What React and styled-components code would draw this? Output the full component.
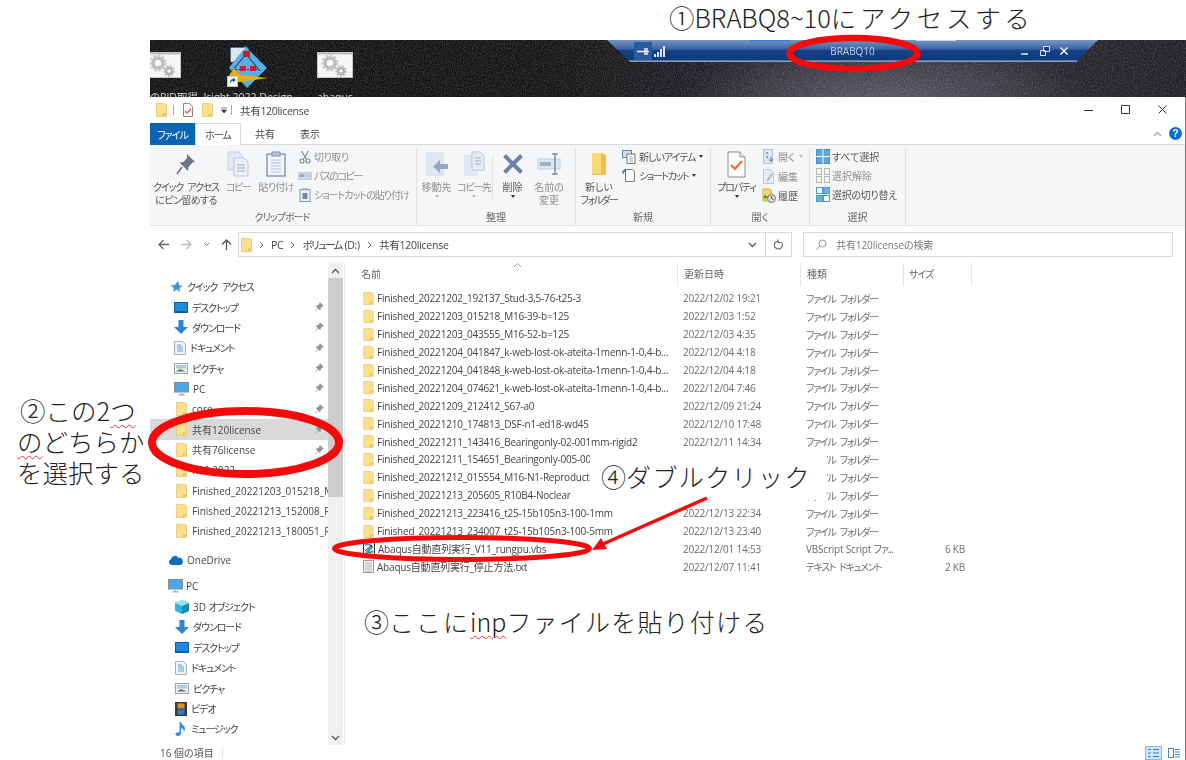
import React from "react";
import styled, { createGlobalStyle } from "styled-components";

const UI = `"Open Sans", "Noto Sans CJK JP", sans-serif`;
const NOTE = `"Noto Sans CJK JP", "Noto Sans", sans-serif`;

const Global = createGlobalStyle`
  html, body { margin: 0; padding: 0; background: #fff; overflow: hidden; }
  #root { width: 1186px; height: 760px; }
`;

const Page = styled.div`
  position: relative; width: 1186px; height: 760px; overflow: hidden;
  background: #fff; display: flex; flex-direction: column;
`;
const TopCaption = styled.div`
  height: 40px; box-sizing: border-box; padding-left: 669px;
  font: 300 25.5px/33px ${NOTE}; color: #222; white-space: nowrap;
`;
const Wide = styled.span` letter-spacing: ${p => p.$ls}px; `;
const Kata = styled.span` letter-spacing: ${p => p.$ls ?? -1.1}px; word-spacing: 3px; `;
const Shot = styled.div`
  margin-left: 150px; width: 1036px; height: 720px; display: flex; flex-direction: column;
  filter: blur(0.35px); overflow: hidden;
`;

/* desktop strip */
const Desktop = styled.div`
  position: relative; height: 57px; flex: none; overflow: hidden; display: flex; gap: 12px;
  background:
    radial-gradient(ellipse 200px 62px at 735px 60px, #5a5661 0%, #45424c 45%, rgba(50,48,54,0) 100%),
    linear-gradient(90deg, #121214 0%, #141416 38%, #26262b 62%, #2a2a30 80%, #1e1e23 100%);
`;
const Grain = styled.svg`
  position: absolute; inset: 0; width: 100%; height: 100%; opacity: .4; mix-blend-mode: screen;
`;
const DeskIcon = styled.div`
  position: relative; flex: none; width: ${p => p.$w}px; margin-left: ${p => p.$ml || 0}px;
  display: flex; flex-direction: column; align-items: ${p => p.$left ? "flex-start" : "center"};
  padding-top: ${p => p.$top}px;
  span { font: 10.5px/13px ${UI}; font-feature-settings: "palt"; color: #d7d7d7; white-space: nowrap; position: absolute; top: 51px; }
`;
const RdpBar = styled.div`
  position: absolute; left: 457px; top: 0; width: 491px; height: 22px;
  clip-path: polygon(0 0, 100% 0, 95.6% 100%, 4.7% 100%);
  background: linear-gradient(180deg, #7595c0 0%, #3f69a6 38%, #143f84 50%, #0e3a80 90%, #8a9bb8 95%);
  display: flex; align-items: center; font: 10px/22px ${UI}; color: #c2d2e6;
  &::before {
    content: ""; position: absolute; left: 143px; top: 0; width: 40px; height: 1px; background: #2a7fe0;
  }
  &::after {
    content: ""; position: absolute; left: 309px; top: 0; width: 40px; height: 1px; background: #cfd6df;
  }
`;
const RdpPin = styled.div`
  width: 18px; height: 18px; margin-left: 27px; background: #2a5a9e; display: flex; align-items: center; justify-content: center;
`;
const RdpName = styled.div` position: absolute; left: 0; right: 0; text-align: center; `;
const RdpControls = styled.div`
  position: absolute; right: 29px; top: 0; height: 22px; display: flex; align-items: center; gap: 9.5px;
`;

/* explorer */
const Explorer = styled.div`
  flex: 1; display: flex; flex-direction: column; background: #fff; min-height: 0;
  border-right: 1px solid #777;
  font-family: ${UI}; font-size: 10px; color: #444; font-feature-settings: "palt";
`;
const TitleBar = styled.div`
  height: 26px; flex: none; display: flex; align-items: center; padding-left: 6px;
`;
const QuickSep = styled.i` width: 1px; height: 10px; background: #aaa; margin: 0 ${p => p.$m || 9}px; `;
const TitleText = styled.div` font-size: 10.5px; color: #444; margin-left: 4px; letter-spacing: -.3px; `;
const WinButtons = styled.div`
  margin-left: auto; display: flex; align-items: center; justify-content: space-between; padding-right: 17px; width: 84px;
`;
const Tabs = styled.div`
  height: 22px; flex: none; display: flex; align-items: stretch; border-bottom: 1px solid #dadbdc; box-sizing: border-box;
`;
const FileTab = styled.div`
  width: 45px; background: #0a64b4; color: #fff; display: flex; align-items: center; justify-content: center; font-size: 10px; margin-bottom: -1px;
`;
const Tab = styled.div`
  width: ${p => p.$w}px; display: flex; align-items: center; justify-content: center; color: #444; font-size: 10px;
  ${p => p.$active && `background:#fff; border:1px solid #dadbdc; border-bottom:0; margin-bottom:-1px; box-sizing:border-box;`}
`;
const TabTools = styled.div`
  margin-left: auto; display: flex; align-items: center; gap: 7px; padding-right: 3px;
`;
const HelpDot = styled.div`
  width: 13px; height: 13px; border-radius: 50%; background: #0a6cd6; color: #fff;
  font: 700 10px/13px "Liberation Sans", sans-serif; text-align: center;
`;
const Ribbon = styled.div`
  height: 81px; flex: none; display: flex; background: #f5f6f7; border-bottom: 1px solid #e2e3e4; box-sizing: border-box;
`;
const Group = styled.div`
  width: ${p => p.$w}px; height: 78px; margin-top: 2px; box-sizing: border-box; flex: none; border-right: 1px solid #e2e3e4;
  display: flex; flex-direction: column;
`;
const GroupBody = styled.div` height: 63px; display: flex; flex: none; `;
const GroupLabel = styled.div`
  height: 15px; text-align: center; color: #666; font-size: 10px; line-height: 15px; padding-right: ${p => p.$pr || 0}px;
`;
const BigBtn = styled.div`
  width: ${p => p.$w}px; flex: none; display: flex; flex-direction: column; align-items: center;
  color: ${p => p.$off ? "#8f8f8f" : "#555"}; font-size: 10px; line-height: 12.5px; text-align: center; white-space: nowrap;
`;
const BigIcon = styled.div` height: 34px; flex: none; display: flex; align-items: center; justify-content: center; `;
const Caret = styled.div`
  width: 0; height: 0; border: 2.5px solid transparent; border-top: 3px solid ${p => p.$c || "#333"}; border-bottom: 0; margin: 1px auto 0;
`;
const RibbonSep = styled.i` width: 1px; height: 46px; margin-top: 8px; background: #e0e1e2; flex: none; `;
const SmallCol = styled.div`
  display: flex; flex-direction: column; margin-left: ${p => p.$ml || 0}px;
`;
const SmallBtn = styled.div`
  height: ${p => p.$h || 19}px; display: flex; align-items: center; white-space: nowrap;
  color: ${p => p.$off ? "#8f8f8f" : "#555"}; font-size: 10px;
  > svg { flex: none; width: 14px; margin-right: ${p => p.$gap || 2}px; }
`;
const InlineCaret = styled.i`
  display: inline-block; width: 0; height: 0; margin-left: 4px;
  border: 2.5px solid transparent; border-top: 3px solid ${p => p.$c || "#333"}; border-bottom: 0;
`;

const AddressRow = styled.div`
  height: 37px; flex: none; box-sizing: border-box; padding-top: 6px; display: flex;
`;
const Nav = styled.div`
  width: 88px; height: 25px; flex: none; display: flex; align-items: center; padding-left: 7px; box-sizing: border-box; gap: 10px;
`;
const Field = styled.div`
  height: 25px; box-sizing: border-box; border: 1px solid #d9d9d9; background: #fff; display: flex; align-items: center; flex: none;
  width: ${p => p.$w}px; margin-left: ${p => p.$ml || 0}px; color: #444;
`;
const Crumb = styled.span` margin-left: 7px; font-size: 10.5px; letter-spacing: -.25px; `;
const CrumbArrow = styled.svg` margin-left: 7px; flex: none; `;
const Push = styled.span` margin-left: auto; margin-right: 8px; display: flex; `;
const FieldEnd = styled.div`
  width: 25px; height: 23px; border-left: 1px solid #d9d9d9; display: flex; align-items: center; justify-content: center;
`;
const SearchText = styled.span` color: #777; margin-left: 9px; font-size: 10px; letter-spacing: -.1px; `;

const Body = styled.div` flex: 1; display: flex; min-height: 0; `;
const Sidebar = styled.div`
  width: 178px; flex: none; overflow: hidden; padding-top: 13.5px; box-sizing: border-box;
`;
const SideItem = styled.div`
  height: 20.4px; display: flex; align-items: center; white-space: pre; position: relative;
  padding-left: ${p => p.$pad}px; margin-top: ${p => p.$mt || 0}px; color: #444; font-size: 10px;
  background: ${p => p.$sel ? "#d9d9d9" : "transparent"};
  > svg:first-child { flex: none; margin-right: ${p => p.$gap || 4}px; }
`;
const SidePin = styled.svg` position: absolute; left: 165px; top: 5px; `;
const ScrollBar = styled.div`
  width: 15px; flex: none; background: #f0f0f0; display: flex; flex-direction: column;
`;
const ScrollBtn = styled.div` height: 15px; flex: none; display: flex; align-items: center; justify-content: center; `;
const ScrollThumb = styled.div` height: 219px; flex: none; background: #cdcdcd; `;
const ScrollFill = styled.div` flex: 1; `;

const FileArea = styled.div`
  flex: 1; margin-left: 1px; border-left: 1px solid #eee; min-width: 0; position: relative;
`;
const cols = "333px 123px 103px 68px";
const HeadRow = styled.div`
  display: grid; grid-template-columns: ${cols}; height: 23px; margin-bottom: 3.5px; position: relative;
`;
const HeadCell = styled.div`
  box-sizing: border-box; border-right: 1px solid #e5e5e5; color: #666; font-size: 10px; line-height: 23px;
  padding-left: ${p => p.$pl || 6}px;
`;
const SortMark = styled.svg` position: absolute; left: 168px; top: -1px; `;
const Row = styled.div`
  display: grid; grid-template-columns: ${cols}; height: 17.9px; align-items: center; white-space: nowrap; letter-spacing: -.2px;
`;
const NameCell = styled.div`
  display: flex; align-items: center; padding-left: 18px; color: #444; font-size: 10px; overflow: hidden;
  > svg { flex: none; margin-right: 3px; }
`;
const DateCell = styled.div` padding-left: 5px; color: #6d6d6d; font-size: 10px; `;
const TypeCell = styled.div` padding-left: 5px; color: #6d6d6d; font-size: 10px; `;
const SizeCell = styled.div` text-align: right; padding-right: 7px; color: #6d6d6d; font-size: 10px; `;

const Status = styled.div`
  height: 15px; flex: none; display: flex; align-items: center; padding-left: 10px; color: #555; font-size: 10px; position: relative;
`;
const StatusSep = styled.i` width: 1px; height: 10px; background: #e2e2e2; margin-left: 8px; `;
const ViewBtns = styled.div` margin-left: auto; display: flex; gap: 4px; padding-right: 2px; `;
const ViewBtn = styled.div`
  width: 17px; height: 14px; box-sizing: border-box; display: flex; align-items: center; justify-content: center;
  ${p => p.$on && "background:#cfe6f8; border:1px solid #7fbde8;"}
`;

/* annotations */
const Overlay = styled.svg` position: absolute; left: 0; top: 0; pointer-events: none; `;
const NoteLeft = styled.div`
  position: absolute; left: 17px; top: 394px; font: 300 25.5px/31px ${NOTE}; color: #222; white-space: nowrap;
`;
const NoteLine = styled.div` padding-left: ${p => p.$pl || 0}px; `;
const Spell = styled.span`
  text-decoration: underline wavy #e33; text-decoration-thickness: 1px; text-underline-offset: 3px;
`;
const NoteCallout = styled.div`
  position: absolute; left: 590px; top: 455px; width: 237px; height: 45px; box-sizing: border-box; padding-left: 11px;
  background: #fff; font: 300 25px/43px ${NOTE}; color: #222; white-space: nowrap;
`;
const NotePaste = styled.div`
  position: absolute; left: 364px; top: 603px; font: 300 25px/36px ${NOTE}; color: #222; white-space: nowrap;
`;

/* icons */
const Folder = ({ w = 11, h = 14 }) => (
  <svg width={w} height={h} viewBox="0 0 11 14">
    <path d="M.5.5h7l3 1v12H.5z" fill="#fcdf8f" stroke="#e9c566" strokeWidth=".8" />
    <path d="M7.5 13.5v-2.4h3" fill="#f2c85b" stroke="#e0b74f" strokeWidth=".8" />
  </svg>
);
const Pin = () => (
  <SidePin width="9" height="10" viewBox="0 0 9 10">
    <path d="M5 .6 8.4 4 7 4.3 5.4 6.3 5 8 1 4 2.8 3.6 4.7 2z M2.6 6.4.6 9.2" fill="#8d949c" stroke="#8d949c" strokeWidth=".7" />
  </SidePin>
);
const GearArt = () => (
  <g>
    <circle cx="13" cy="11" r="5" fill="none" stroke="#bdbdbd" strokeWidth="3.4" />
    <circle cx="13" cy="11" r="7.4" fill="none" stroke="#c6c6c6" strokeWidth="2.2" strokeDasharray="2.4 1.9" />
    <circle cx="24" cy="19" r="3" fill="none" stroke="#b2b2b2" strokeWidth="2.4" />
    <circle cx="24" cy="19" r="5" fill="none" stroke="#bcbcbc" strokeWidth="1.8" strokeDasharray="2 1.4" />
  </g>
);
const Isight = () => (
  <svg width="42" height="42" viewBox="0 0 42 42">
    <rect x="4" y="2" width="16" height="13" fill="#d9e6f2" stroke="#a7b4c0" />
    <path d="M18 0 40 22 20 42 2 22z" fill="#59aee8" />
    <path d="M4 2h14L6 16H4z" fill="#d9e6f2" />
    <path d="M19 8 5 25M19 8 33 25" stroke="#16233a" strokeWidth="1" fill="none" />
    <path d="M8 23.500H31" stroke="#16233a" strokeWidth="1" strokeDasharray="2 2" />
    <rect x="16" y="5" width="7" height="6" fill="#c8202a" />
    <rect x="13" y="20" width="6" height="5" fill="#c8202a" />
    <rect x="23" y="20" width="6" height="5" fill="#c8202a" />
    <path d="M1 31 7 22 13 29 41 32 13 36 4 36z" fill="#e8ae10" />
    <rect x=".5" y="30.500" width="10" height="10" fill="#fff" stroke="#c8c8c8" />
    <path d="M3 38v-2c0-2 1.500-3 3-3v-1.500l3 2.500-3 2.500V35c-1.500 0-2.500 1-3 3z" fill="#1c63ac" />
  </svg>
);
const Ico = {
  pushpin: (
    <svg width="22" height="24" viewBox="0 0 22 24">
      <path d="M12 2 20 10 17.5 10.5 13.5 15 13 19 4.5 10.5 8.5 10 12 6z" fill="#6b7683" />
      <path d="M7 15 2 22" stroke="#6b7683" strokeWidth="1.6" />
    </svg>
  ),
  copy: (
    <svg width="22" height="26" viewBox="0 0 22 26">
      <path d="M1 1h11l3 3v15H1z" fill="#e3eaf5" stroke="#c3cfe2" />
      <path d="M7 7h10l4 4v14H7z" fill="#edf1f8" stroke="#b9c7dd" />
      <path d="M10 14h8M10 17h8M10 20h8" stroke="#98aac8" />
    </svg>
  ),
  paste: (
    <svg width="20" height="26" viewBox="0 0 20 26">
      <rect x="1" y="3" width="18" height="22" fill="#f2f5fa" stroke="#6e85a7" strokeWidth="1.2" />
      <rect x="6" y="1" width="8" height="4" fill="#bcc8da" stroke="#7d90ac" />
      <path d="M5 9h10M5 12h10M5 15h10M5 18h10M5 21h10" stroke="#b8c4d8" />
    </svg>
  ),
  cut: (
    <svg width="12" height="14" viewBox="0 0 12 14">
      <path d="M2.5 1 8 10M9.5 1 4 10" stroke="#7e8a9b" strokeWidth="1.2" fill="none" />
      <circle cx="3" cy="11" r="2" fill="none" stroke="#7e8a9b" strokeWidth="1.2" />
      <circle cx="9" cy="11" r="2" fill="none" stroke="#7e8a9b" strokeWidth="1.2" />
    </svg>
  ),
  pathCopy: (
    <svg width="14" height="10" viewBox="0 0 14 10">
      <rect x=".5" y="1.5" width="13" height="7" fill="#cfdaec" stroke="#c0cde2" />
      <path d="M2 3l1 3 1-3 1 3 1-3M8 5h1.500M10.500 5H12" stroke="#7d8ba3" strokeWidth=".7" fill="none" />
    </svg>
  ),
  shortcutPaste: (
    <svg width="13" height="14" viewBox="0 0 13 14">
      <rect x="1.500" y="1.500" width="10" height="12" fill="#eef2f8" stroke="#8497b3" />
      <rect x="4" y="0" width="5" height="2.500" fill="#a8b5c8" />
      <rect x="4" y="5" width="5" height="6" fill="#6e86aa" />
    </svg>
  ),
  move: (
    <svg width="24" height="26" viewBox="0 0 24 26">
      <rect x="1" y="1" width="18" height="24" fill="#dfe7f3" />
      <path d="M23 13H15V9l-7 6.500 7 6.500v-4h8z" fill="#92a7c7" />
    </svg>
  ),
  copyTo: (
    <svg width="22" height="26" viewBox="0 0 22 26">
      <rect x="1" y="4" width="14" height="21" fill="#dfe7f3" />
      <path d="M9 1h8l4 4v14H9z" fill="#e7edf6" stroke="#b8c6dc" />
      <path d="M12 7h6M12 10h6M12 13h6" stroke="#9db0cc" />
    </svg>
  ),
  del: (
    <svg width="22" height="22" viewBox="0 0 22 22">
      <path d="M2.500 2.500l17 17M19.500 2.500l-17 17" stroke="#6c82ab" strokeWidth="4" />
    </svg>
  ),
  rename: (
    <svg width="25" height="22" viewBox="0 0 25 22">
      <rect x="1" y="6" width="22" height="10" fill="#e0e7f2" stroke="#c0cce0" />
      <rect x="3" y="9" width="11" height="4" fill="#9fb0cb" />
      <path d="M15 1h6M18 1v20M15 21h6" stroke="#7e91b0" strokeWidth="1.600" fill="none" />
    </svg>
  ),
  newFolder: (
    <svg width="16" height="24" viewBox="0 0 16 24">
      <path d="M1 1h9l5 2v20H1z" fill="#fcd975" />
      <path d="M10 1l5 2v20h-5z" fill="#f0c04a" />
      <path d="M1 22h9v1H1z" fill="#e8bb50" />
    </svg>
  ),
  newItem: (
    <svg width="14" height="14" viewBox="0 0 14 14">
      <rect x=".5" y=".5" width="9" height="7" fill="#cfe0f3" stroke="#5d85b5" />
      <rect x="5" y="4" width="8" height="9.500" fill="#fff" stroke="#777" />
      <path d="M7 7h4M7 9h4M7 11h4" stroke="#999" strokeWidth=".8" />
    </svg>
  ),
  shortcut: (
    <svg width="14" height="15" viewBox="0 0 14 15">
      <path d="M3.500 1.500h7l2 2v10h-9z" fill="#fff" stroke="#777" />
      <path d="M1 6V3.500h2.500M1 3.500 4 1" stroke="#2773c3" strokeWidth="1.200" fill="none" />
    </svg>
  ),
  props: (
    <svg width="19" height="27" viewBox="0 0 19 27">
      <path d="M1 1h12l5 5v20H1z" fill="#fff" stroke="#8a8a8a" />
      <path d="M13 1v5h5" fill="#eee" stroke="#8a8a8a" />
      <path d="M4 14l4 4 7-8" stroke="#ea6a26" strokeWidth="2.200" fill="none" />
    </svg>
  ),
  open: (
    <svg width="12" height="15" viewBox="0 0 12 15">
      <rect x=".5" y=".5" width="9" height="14" fill="#dfe7f3" stroke="#b7c5da" />
      <path d="M3 3h2v2H3zM3 7h2v2H3z" fill="#8ea3c1" />
      <path d="M8 8v4M6 10.500l2 2 2-2" stroke="#4f6f9c" fill="none" />
    </svg>
  ),
  edit: (
    <svg width="12" height="15" viewBox="0 0 12 15">
      <path d="M.5.500h7l3 3v11H.5z" fill="#e6ecf5" stroke="#bccade" />
      <path d="M4 12 9 5" stroke="#9eb2cf" strokeWidth="1.600" />
    </svg>
  ),
  history: (
    <svg width="14" height="15" viewBox="0 0 14 15">
      <path d="M1 1h7l1 1v11H1z" fill="#f9d76f" stroke="#d4ae42" />
      <path d="M1 9l3-3v2h3v2H4v2z" fill="#52a82f" />
      <circle cx="9.500" cy="10.500" r="4" fill="#dcdcdc" stroke="#777" />
      <path d="M9.500 8v2.500l2 1" stroke="#555" fill="none" />
    </svg>
  ),
  selAll: (
    <svg width="14" height="15" viewBox="0 0 14 15">
      <rect x=".5" y=".5" width="13" height="14" fill="#5da7e5" stroke="#4190d6" />
      <path d="M7 0v15M0 7.500h14" stroke="#fff" />
    </svg>
  ),
  selNone: (
    <svg width="14" height="15" viewBox="0 0 14 15">
      <g fill="#fff" stroke="#b4b4b4">
        <rect x=".5" y=".5" width="5" height="6" /><rect x="8.500" y=".5" width="5" height="6" />
        <rect x=".5" y="8.500" width="5" height="6" /><rect x="8.500" y="8.500" width="5" height="6" />
      </g>
    </svg>
  ),
  selInv: (
    <svg width="14" height="15" viewBox="0 0 14 15">
      <g stroke="#4f9ade">
        <rect x=".5" y=".5" width="6" height="6" fill="#fff" /><rect x="7.500" y=".5" width="6" height="6" fill="#6db0e8" />
        <rect x=".5" y="8.500" width="6" height="6" fill="#6db0e8" /><rect x="7.500" y="8.500" width="6" height="6" fill="#fff" />
      </g>
    </svg>
  ),
  star: (
    <svg width="13" height="13" viewBox="0 0 13 13">
      <path d="M8 .5 9 5l3.500 1-3 2 .5 4-3-2.500L3 12l1-4-3.500-2.500L5 5z" fill="#3f92d8" />
    </svg>
  ),
  desktop: (
    <svg width="14" height="11" viewBox="0 0 14 11">
      <rect x=".5" y=".5" width="13" height="10" fill="#1e8be0" stroke="#0d5ea8" />
      <path d="M1 9.500h12" stroke="#0d5ea8" />
    </svg>
  ),
  down: (
    <svg width="14" height="14" viewBox="0 0 14 14">
      <path d="M4.500 0h5v7H14l-7 7-7-7h4.500z" fill="#2e86d4" />
    </svg>
  ),
  doc: (
    <svg width="12" height="14" viewBox="0 0 12 14">
      <path d="M.5.500h8l3 3v10H.5z" fill="#f1f4f7" stroke="#a9b0b8" />
      <path d="M3 4h4M3 6h6M3 8h6M3 10h6" stroke="#5a94c8" strokeWidth=".9" />
    </svg>
  ),
  pic: (
    <svg width="14" height="11" viewBox="0 0 14 11">
      <rect x=".5" y=".5" width="13" height="10" fill="#eef2f5" stroke="#9aa5ae" />
      <rect x="2" y="2" width="10" height="3.500" fill="#a8cbe6" />
      <path d="M2 8.500 6 6l6 2.500z" fill="#5b7a5a" />
    </svg>
  ),
  pc: (
    <svg width="15" height="14" viewBox="0 0 15 14">
      <rect x=".5" y=".5" width="14" height="9.500" fill="#48a8ee" stroke="#7c8c9a" />
      <path d="M5 12h5l1 1.500H4z" fill="#a7b2bb" /><path d="M7 10h1v2H7z" fill="#b7bfc6" />
    </svg>
  ),
  cube: (
    <svg width="14" height="14" viewBox="0 0 14 14">
      <path d="M7 0 14 3v8l-7 3-7-3V3z" fill="#2fb6d8" />
      <path d="M7 6 14 3v8l-7 3z" fill="#148cb5" />
      <path d="M7 0 14 3 7 6 0 3z" fill="#9fe3f0" />
    </svg>
  ),
  video: (
    <svg width="12" height="14" viewBox="0 0 12 14">
      <rect width="12" height="14" fill="#3d3d3d" />
      <rect x="2.500" y="1.500" width="7" height="5" fill="#e58b2a" /><rect x="2.500" y="7.500" width="7" height="5" fill="#2d80c8" />
    </svg>
  ),
  music: (
    <svg width="12" height="14" viewBox="0 0 12 14">
      <path d="M4.500 0h1.500c0 3 4 3 4 7 0 1-.5 2-1 2.500.2-2-1.500-3-3-3.500v5.500C6 13 4.500 14 3 14S.5 13 .5 12s1.500-2 4-1.500z" fill="#2f8fe0" />
    </svg>
  ),
  cloud: (
    <svg width="15" height="10" viewBox="0 0 15 10">
      <path d="M3.500 10A3 3 0 0 1 3 4.200 4 4 0 0 1 10.500 3 3.500 3.500 0 0 1 12 10z" fill="#0a6fc4" />
    </svg>
  ),
  vbs: (
    <svg width="12" height="13" viewBox="0 0 12 13">
      <path d="M.5.500h11v12H.5z" fill="#fff" stroke="#333" />
      <path d="M2 3c3-2 6 0 7 2L4 10c3 1 5 0 6-1" stroke="#1b8ea3" strokeWidth="1.800" fill="none" />
      <path d="M2 9 9 3" stroke="#222" strokeWidth="1" />
    </svg>
  ),
  txt: (
    <svg width="11" height="13" viewBox="0 0 11 13">
      <path d="M.5.500h10v12H.5z" fill="#f4f4f4" stroke="#9a9a9a" />
      <path d="M2 3h7M2 5h7M2 7h7M2 9h7M2 11h7" stroke="#aaa" strokeWidth=".8" />
    </svg>
  ),
};
const Chev = ({ up, c = "#555" }) => (
  <svg width="9" height="6" viewBox="0 0 9 6"><path d={up ? "M1 5l3.500-3.500L8 5" : "M1 1l3.500 3.500L8 1"} fill="none" stroke={c} strokeWidth="1.300" /></svg>
);
const Arrow = ({ d, c }) => (
  <svg width="13" height="13" viewBox="0 0 13 13"><path d={d} fill="none" stroke={c} strokeWidth="1.300" /></svg>
);
const CA = () => (
  <CrumbArrow width="5" height="8" viewBox="0 0 5 8"><path d="M1 1l3 3-3 3" fill="none" stroke="#666" /></CrumbArrow>
);

const rows = [
  ["Finished_20221202_192137_Stud-3,5-76-t25-3", "2022/12/02 19:21"],
  ["Finished_20221203_015218_M16-39-b=125", "2022/12/03 1:52"],
  ["Finished_20221203_043555_M16-52-b=125", "2022/12/03 4:35"],
  ["Finished_20221204_041847_k-web-lost-ok-ateita-1menn-1-0,4-b...", "2022/12/04 4:18"],
  ["Finished_20221204_041848_k-web-lost-ok-ateita-1menn-1-0,4-b...", "2022/12/04 4:18"],
  ["Finished_20221204_074621_k-web-lost-ok-ateita-1menn-1-0,4-b...", "2022/12/04 7:46"],
  ["Finished_20221209_212412_S67-a0", "2022/12/09 21:24"],
  ["Finished_20221210_174813_DSF-n1-ed18-wd45", "2022/12/10 17:48"],
  ["Finished_20221211_143416_Bearingonly-02-001mm-rigid2", "2022/12/11 14:34"],
  ["Finished_20221211_154651_Bearingonly-005-001mm-rigid2", "2022/12/11 15:46"],
  ["Finished_20221212_015554_M16-N1-Reproduction", "2022/12/12 1:55"],
  ["Finished_20221213_205605_R10B4-Noclear", "2022/12/13 20:56"],
  ["Finished_20221213_223416_t25-15b105n3-100-1mm", "2022/12/13 22:34"],
  ["Finished_20221213_234007_t25-15b105n3-100-5mm", "2022/12/13 23:40"],
];

const side1 = [
  [Ico.desktop, "デスクトップ", true], [Ico.down, "ダウンロード", true], [Ico.doc, "ドキュメント", true],
  [Ico.pic, "ピクチャ", true], [Ico.pc, "PC"], [null, "core"],
];
const side2 = ["Finished_20221203_015218_M16-39-b=125", "Finished_20221213_152008_R20B4", "Finished_20221213_180051_R20B4"];
const side3 = [
  [Ico.cube, "オブジェクト", true, "3D "], [Ico.down, "ダウンロード", true], [Ico.desktop, "デスクトップ", true],
  [Ico.doc, "ドキュメント", true], [Ico.pic, "ピクチャ", true], [Ico.video, "ビデオ", true], [Ico.music, "ミュージック", true],
];

export default function App() {
  return (
    <Page>
      <Global />
      <TopCaption>①BRABQ8~10<Wide $ls={3.6}>にアクセスする</Wide></TopCaption>
      <Shot>
        <Desktop>
          <Grain>
            <filter id="grain"><feTurbulence type="fractalNoise" baseFrequency="0.9 0.7" numOctaves="2" seed="4" /><feColorMatrix values="0 0 0 0 .6  0 0 0 0 .6  0 0 0 0 .65  0 0 0 1.200 -.45" /></filter>
            <rect width="100%" height="100%" filter="url(#grain)" />
          </Grain>
          <DeskIcon $w={46} $top={12} $left>
            <svg width="31" height="26" viewBox="5 0 31 26"><rect x="0" y=".5" width="35.500" height="25" fill="#f6f6f6" stroke="#c4c4c4" /><rect x="0" y="1" width="35" height="1.500" fill="#bdbdbd" /><GearArt /></svg>
            <span>のPID取得</span>
          </DeskIcon>
          <DeskIcon $w={80} $top={6}>
            <Isight />
            <span>Isight 2022 Design</span>
          </DeskIcon>
          <DeskIcon $w={50} $top={12} $ml={10}>
            <svg width="36" height="26" viewBox="0 0 36 26"><rect x=".5" y=".5" width="35" height="25" fill="#f6f6f6" stroke="#c4c4c4" /><rect x="1" y="1" width="34" height="1.500" fill="#bdbdbd" /><GearArt /></svg>
            <span>abaqus</span>
          </DeskIcon>
          <RdpBar>
            <RdpPin>
              <svg width="12" height="9" viewBox="0 0 12 9"><path d="M0 4.500h8M8 1v7M10 1v7M8 4.500h4" stroke="#e6edf6" strokeWidth="1.500" fill="none" /></svg>
            </RdpPin>
            <svg style={{ marginLeft: 1 }} width="12" height="11" viewBox="0 0 12 11"><path d="M1 8h2v3H1zM4 6h2v5H4zM7 3h2v8H7zM10 0h2v11h-2z" fill="#dfe8f4" /></svg>
            <RdpName>BRABQ10</RdpName>
            <RdpControls>
              <svg width="10" height="10" viewBox="0 0 10 10"><path d="M1 8h7" stroke="#e4ecf6" strokeWidth="1.600" /></svg>
              <svg width="10" height="10" viewBox="0 0 10 10"><path d="M3.500.500h6v5h-6zM.5 4.500h5v5h-5z" fill="#12397c" stroke="#dfe8f4" /></svg>
              <svg width="10" height="10" viewBox="0 0 10 10"><path d="M1.500 1.500l7 7M8.500 1.500l-7 7" stroke="#e8eef7" strokeWidth="1.700" /></svg>
            </RdpControls>
          </RdpBar>
        </Desktop>

        <Explorer>
          <TitleBar>
            <Folder />
            <QuickSep $m={6} />
            <svg style={{ marginLeft: 3 }} width="10" height="14" viewBox="0 0 10 14"><path d="M.5.500h6l3 3v10h-9z" fill="#fff" stroke="#888" /><path d="M2 8l2 2 4-4" stroke="#e5602a" strokeWidth="1.300" fill="none" /></svg>
            <span style={{ width: 9 }} />
            <Folder />
            <svg style={{ marginLeft: 8 }} width="6" height="7" viewBox="0 0 6 7"><path d="M0 1h6M.5 3h5L3 6z" stroke="#333" fill="#333" strokeWidth=".6" /></svg>
            <QuickSep $m={4} />
            <TitleText>共有120license</TitleText>
            <WinButtons>
              <svg width="10" height="10" viewBox="0 0 10 10"><path d="M0 5.500h9" stroke="#333" /></svg>
              <svg width="10" height="10" viewBox="0 0 10 10"><path d="M.5.500h8v8h-8z" fill="none" stroke="#333" /></svg>
              <svg width="10" height="10" viewBox="0 0 10 10"><path d="M.5.500l8 8M8.500.500l-8 8" stroke="#333" /></svg>
            </WinButtons>
          </TitleBar>
          <Tabs>
            <FileTab><Kata $ls={-1}>ファイル</Kata></FileTab>
            <Tab $w={46} $active><Kata $ls={-1}>ホーム</Kata></Tab>
            <Tab $w={48}>共有</Tab>
            <Tab $w={42}>表示</Tab>
            <TabTools>
              <Chev up c="#aaa" />
              <HelpDot>?</HelpDot>
            </TabTools>
          </Tabs>
          <Ribbon>
            <Group $w={267}>
              <GroupBody>
                <BigBtn $w={72}><BigIcon>{Ico.pushpin}</BigIcon><Kata $ls={-1.2}>クイック アクセス</Kata><Kata $ls={-.6}>にピン留めする</Kata></BigBtn>
                <BigBtn $w={32} $off><BigIcon>{Ico.copy}</BigIcon><Kata $ls={-1.5}>コピー</Kata></BigBtn>
                <BigBtn $w={44} $off><BigIcon>{Ico.paste}</BigIcon><Kata $ls={-.8}>貼り付け</Kata></BigBtn>
                <SmallCol>
                  <SmallBtn $off>{Ico.cut}<Kata $ls={-.5}>切り取り</Kata></SmallBtn>
                  <SmallBtn $off>{Ico.pathCopy}<Kata $ls={-1.5}>パスのコピー</Kata></SmallBtn>
                  <SmallBtn $off>{Ico.shortcutPaste}<Kata $ls={-1}>ショートカットの貼り付け</Kata></SmallBtn>
                </SmallCol>
              </GroupBody>
              <GroupLabel $pr={2}><Kata $ls={-1}>クリップボード</Kata></GroupLabel>
            </Group>
            <Group $w={159}>
              <GroupBody>
                <BigBtn $w={39} $off><BigIcon>{Ico.move}</BigIcon>移動先<Caret $c="#bbb" /></BigBtn>
                <BigBtn $w={36} $off><BigIcon>{Ico.copyTo}</BigIcon><Kata $ls={-1.3}>コピー先</Kata><Caret $c="#bbb" /></BigBtn>
                <RibbonSep />
                <BigBtn $w={39}><BigIcon>{Ico.del}</BigIcon>削除<Caret /></BigBtn>
                <BigBtn $w={34} $off><BigIcon>{Ico.rename}</BigIcon>名前の<br />変更</BigBtn>
              </GroupBody>
              <GroupLabel>整理</GroupLabel>
            </Group>
            <Group $w={135}>
              <GroupBody>
                <BigBtn $w={46}><BigIcon>{Ico.newFolder}</BigIcon>新しい<Kata $ls={-1.5}>フォルダー</Kata></BigBtn>
                <SmallCol>
                  <SmallBtn $gap={3}>{Ico.newItem}<Kata $ls={-1}>新しいアイテム</Kata><InlineCaret /></SmallBtn>
                  <SmallBtn $gap={3}>{Ico.shortcut}<Kata $ls={-1.4}>ショートカット</Kata><InlineCaret /></SmallBtn>
                </SmallCol>
              </GroupBody>
              <GroupLabel>新規</GroupLabel>
            </Group>
            <Group $w={99}>
              <GroupBody>
                <BigBtn $w={51}><BigIcon>{Ico.props}</BigIcon><Kata $ls={-1.2}>プロパティ</Kata><Caret /></BigBtn>
                <SmallCol>
                  <SmallBtn $off>{Ico.open}開く<InlineCaret $c="#bbb" /></SmallBtn>
                  <SmallBtn $off $h={20}>{Ico.edit}編集</SmallBtn>
                  <SmallBtn>{Ico.history}履歴</SmallBtn>
                </SmallCol>
              </GroupBody>
              <GroupLabel>開く</GroupLabel>
            </Group>
            <Group $w={96}>
              <GroupBody>
                <SmallCol $ml={6}>
                  <SmallBtn>{Ico.selAll}すべて選択</SmallBtn>
                  <SmallBtn $off>{Ico.selNone}選択解除</SmallBtn>
                  <SmallBtn>{Ico.selInv}<Kata $ls={-.3}>選択の切り替え</Kata></SmallBtn>
                </SmallCol>
              </GroupBody>
              <GroupLabel>選択</GroupLabel>
            </Group>
          </Ribbon>
          <AddressRow>
            <Nav>
              <Arrow c="#666" d="M12 6.500H2M6.500 2 2 6.500 6.500 11" />
              <Arrow c="#bbb" d="M1 6.500h10M6.500 2 11 6.500 6.500 11" />
              <svg width="7" height="5" viewBox="0 0 7 5"><path d="M1 1l2.500 2.500L6 1" fill="none" stroke="#777" /></svg>
              <Arrow c="#555" d="M6.500 12V2M2 6.500 6.500 2 11 6.500" />
            </Nav>
            <Field $w={554}>
              <span style={{ width: 2 }} />
              <Folder />
              <CA /><Crumb>PC</Crumb><CA /><Crumb><Kata $ls={-1.6}>ボリューム</Kata> (D:)</Crumb><CA /><Crumb>共有120license</Crumb>
              <Push><Chev /></Push>
              <FieldEnd>
                <svg width="11" height="12" viewBox="0 0 11 12"><path d="M8.500 3.500a4 4 0 1 1-3-1.500M5 .5v3h3" fill="none" stroke="#666" strokeWidth="1.200" /></svg>
              </FieldEnd>
            </Field>
            <Field $w={370} $ml={11}>
              <svg style={{ marginLeft: 12 }} width="11" height="11" viewBox="0 0 11 11"><circle cx="6.500" cy="4.500" r="3.500" fill="none" stroke="#999" /><path d="M4 7 .5 10.500" stroke="#999" /></svg>
              <SearchText>共有120licenseの検索</SearchText>
            </Field>
          </AddressRow>
          <Body>
            <Sidebar>
              <SideItem $pad={20} $gap={4}>{Ico.star}<Kata>クイック アクセス</Kata></SideItem>
              {side1.map(([ic, t, kata]) => (
                <SideItem key={t} $pad={t === "core" ? 26 : 24} $gap={t === "core" ? 5 : 4}>
                  {ic || <Folder />}{kata ? <Kata>{t}</Kata> : t}<Pin />
                </SideItem>
              ))}
              <SideItem $pad={26} $gap={5} $sel><Folder />共有120license<Pin /></SideItem>
              <SideItem $pad={26} $gap={5}><Folder />共有76license<Pin /></SideItem>
              <SideItem $pad={26} $gap={5}><Folder />R10 2022</SideItem>
              {side2.map(t => <SideItem key={t} $pad={26} $gap={5}><Folder />{t}</SideItem>)}
              <SideItem $pad={18} $gap={4} $mt={8}>{Ico.cloud}OneDrive</SideItem>
              <SideItem $pad={18} $gap={3} $mt={6}>{Ico.pc}PC</SideItem>
              {side3.map(([ic, t, kata, pre]) => <SideItem key={t + ic.props.width} $pad={25} $gap={4}>{ic}{pre}{kata ? <Kata>{t}</Kata> : t}</SideItem>)}
            </Sidebar>
            <ScrollBar>
              <ScrollBtn><Chev up c="#555" /></ScrollBtn>
              <ScrollThumb />
              <ScrollFill />
              <ScrollBtn><Chev c="#555" /></ScrollBtn>
            </ScrollBar>
            <FileArea>
              <HeadRow>
                <SortMark width="9" height="6" viewBox="0 0 9 6"><path d="M1 5l3.500-3.500L8 5" fill="none" stroke="#999" /></SortMark>
                <HeadCell $pl={16}>名前</HeadCell>
                <HeadCell>更新日時</HeadCell>
                <HeadCell>種類</HeadCell>
                <HeadCell $pl={5}><Kata $ls={-1}>サイズ</Kata></HeadCell>
              </HeadRow>
              {rows.map(([n, d]) => (
                <Row key={n}>
                  <NameCell><Folder w={11} h={13} />{n}</NameCell>
                  <DateCell>{d}</DateCell>
                  <TypeCell><Kata $ls={-1.3}>ファイル フォルダー</Kata></TypeCell>
                  <SizeCell />
                </Row>
              ))}
              <Row>
                <NameCell>{Ico.vbs}Abaqus自動直列実行_V11_rungpu.vbs</NameCell>
                <DateCell>2022/12/01 14:53</DateCell>
                <TypeCell>VBScript Script <Kata>ファ...</Kata></TypeCell>
                <SizeCell>6 KB</SizeCell>
              </Row>
              <Row>
                <NameCell>{Ico.txt}Abaqus自動直列実行_停止方法.txt</NameCell>
                <DateCell>2022/12/07 11:41</DateCell>
                <TypeCell><Kata $ls={-1.5}>テキスト ドキュメント</Kata></TypeCell>
                <SizeCell>2 KB</SizeCell>
              </Row>
            </FileArea>
          </Body>
          <Status>
            16 個の項目<StatusSep />
            <ViewBtns>
              <ViewBtn $on>
                <svg width="13" height="10" viewBox="0 0 13 10"><path d="M1 1.500h3M1 5h3M1 8.500h3M6 1.500h6M6 5h6M6 8.500h6" stroke="#3d7fb5" /></svg>
              </ViewBtn>
              <ViewBtn>
                <svg width="13" height="10" viewBox="0 0 13 10"><rect x=".5" y=".5" width="5" height="9" fill="none" stroke="#4d87b5" /><path d="M7 1.500h5M7 4h5M7 6.500h5M7 9h5" stroke="#4d87b5" /></svg>
              </ViewBtn>
            </ViewBtns>
          </Status>
        </Explorer>
      </Shot>

      <NoteLeft>
        <NoteLine $pl={3}>②この2<Spell>つ</Spell></NoteLine>
        <NoteLine><Spell>の</Spell>どちらか</NoteLine>
        <NoteLine>を選択する</NoteLine>
      </NoteLeft>
      <NoteCallout>④<Wide $ls={1.4}>ダブルクリック</Wide></NoteCallout>
      <NotePaste>③<Wide $ls={2}>ここに</Wide><Spell>inp</Spell><Wide $ls={1.2}>ファイルを貼り付ける</Wide></NotePaste>

      <Overlay width="1186" height="760" viewBox="0 0 1186 760">
        <ellipse cx="853.500" cy="53.500" rx="64" ry="15.500" fill="none" stroke="#f40a0a" strokeWidth="6.500" />
        <ellipse cx="245.500" cy="442.500" rx="93.500" ry="31.500" fill="none" stroke="#f40a0a" strokeWidth="8" />
        <ellipse cx="462" cy="548.500" rx="127.500" ry="11" fill="none" stroke="#f40a0a" strokeWidth="5" />
        <path d="M707 498 603 544" stroke="#f40a0a" strokeWidth="3.500" fill="none" />
        <path d="M592 550 601 538 607 549z" fill="#f40a0a" />
      </Overlay>
    </Page>
  );
}
